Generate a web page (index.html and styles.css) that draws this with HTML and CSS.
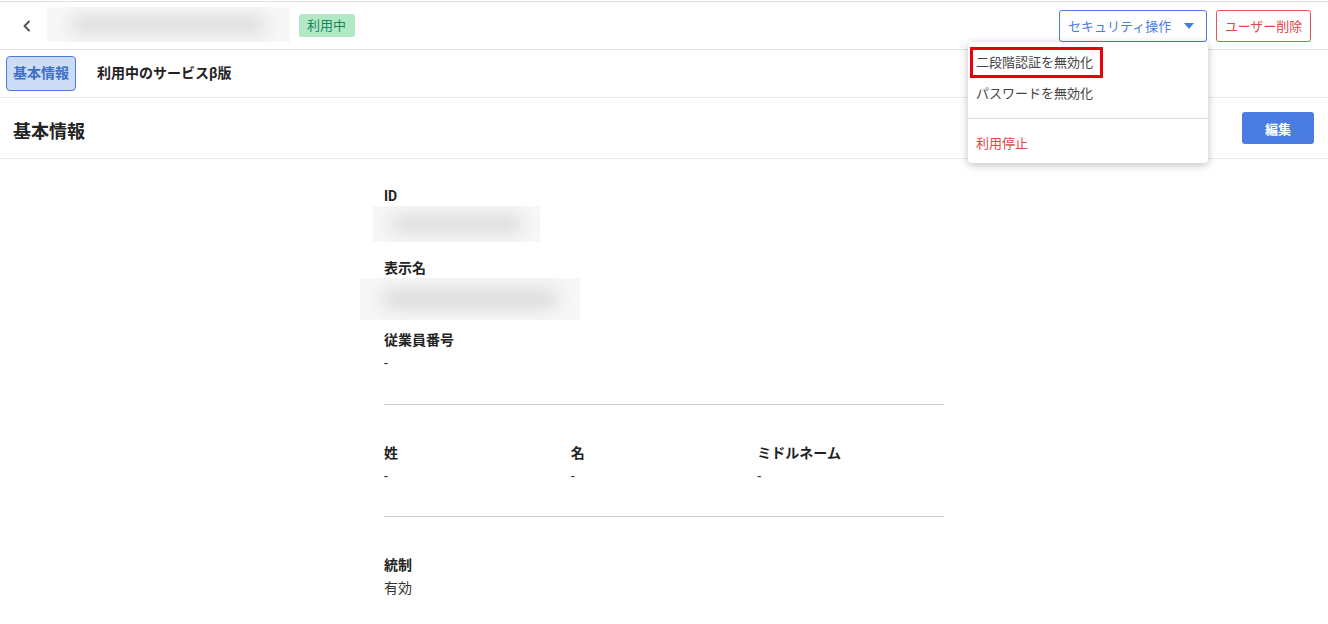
FILE: index.html
```html
<!DOCTYPE html>
<html lang="ja">
<head>
  <meta charset="UTF-8" />
  <meta name="viewport" content="width=device-width, initial-scale=1.0">
  <title>ユーザー詳細</title>
  <link rel="stylesheet" href="styles.css">
</head>
<body>

  <!-- ヘッダー -->
  <header class="pageHeader">
    <div class="headerLeft">
      <button class="backBtn" aria-label="戻る">
        <svg width="16" height="16" viewBox="0 0 16 16"><path d="M10 3.5 L5.5 8 L10 12.5" fill="none" stroke="#555" stroke-width="2" stroke-linecap="round" stroke-linejoin="round"/></svg>
      </button>
      <div class="blurBox nameBlur"><span class="blurInk"></span></div>
      <span class="statusBadge">利用中</span>
    </div>
    <div class="headerRight">
      <button class="btn btnOutline">セキュリティ操作
        <svg width="10" height="6" viewBox="0 0 10 6"><path d="M0 0 H10 L5 6 Z" fill="#4a7be0"/></svg>
      </button>
      <button class="btn btnDanger">ユーザー削除</button>
    </div>

    <!-- セキュリティ操作メニュー -->
    <div class="dropMenu">
      <div class="menuItem menuFocus">二段階認証を無効化</div>
      <div class="menuItem">パスワードを無効化</div>
      <div class="menuDivider"></div>
      <div class="menuItem menuRed">利用停止</div>
    </div>
  </header>

  <!-- タブ -->
  <nav class="tabBar">
    <div class="tab tabActive">基本情報</div>
    <div class="tab">利用中のサービスβ版</div>
  </nav>

  <div class="sectionHead">
    <h2>基本情報</h2>
    <button class="btn btnPrimary">編集</button>
  </div>

  <main class="detail">
    <div class="field">
      <div class="label">ID</div>
      <div class="blurBox idBlur"><span class="blurInk"></span></div>
    </div>
    <div class="field">
      <div class="label">表示名</div>
      <div class="blurBox dispBlur"><span class="blurInk"></span></div>
    </div>
    <div class="field">
      <div class="label">従業員番号</div>
      <div class="value">-</div>
    </div>

    <hr class="rule">

    <div class="nameRow">
      <div class="field">
        <div class="label">姓</div>
        <div class="value">-</div>
      </div>
      <div class="field">
        <div class="label">名</div>
        <div class="value">-</div>
      </div>
      <div class="field">
        <div class="label">ミドルネーム</div>
        <div class="value">-</div>
      </div>
    </div>

    <hr class="rule">

    <div class="field">
      <div class="label">統制</div>
      <div class="value">有効</div>
    </div>
  </main>

</body>
</html>
```

FILE: styles.css
```css
* { margin: 0; padding: 0; box-sizing: border-box; }
html, body {
  font-family: Roboto, "Noto Sans CJK JP", sans-serif;
  background: #fff;
  color: #222;
  overflow: hidden;
}
body { padding-top: 1px; }

button { font-family: inherit; background: none; border: none; cursor: pointer; }

.pageHeader {
  position: relative;
  height: 49px;
  border-top: 1px solid #ddd;
  border-bottom: 1px solid #e3e3e3;
  display: flex;
  align-items: center;
  justify-content: space-between;
  padding: 0 17px 0 18px;
}
.headerLeft { display: flex; align-items: center; }
.backBtn { width: 18px; height: 18px; display: flex; align-items: center; justify-content: center; margin-right: 11px; margin-top: 1px; }

.blurBox {
  position: relative;
  overflow: hidden;
  background: #f7f7f7;
}
.blurInk {
  position: absolute;
  left: 10%; right: 10%; top: 30%; bottom: 30%;
  background: #d4d4d4;
  border-radius: 20px;
  filter: blur(9px);
}
.nameBlur { width: 243px; height: 35px; margin-right: 9px; margin-top: -2px; }

.statusBadge {
  background: #b3e8c6;
  color: #17865a;
  font-size: 13px;
  line-height: 23px;
  padding: 0 9px 0 8px;
  border-radius: 3px;
}

.headerRight { display: flex; gap: 9px; }

.btn {
  height: 32px;
  font-size: 13px;
  border-radius: 3px;
  padding: 0 8px;
  display: flex;
  align-items: center;
}
.btnOutline {
  border: 1px solid #4a7be0;
  color: #4a7be0;
  gap: 13px;
  width: 148px;
  padding: 0 0 0 8px;
}
.btnDanger {
  border: 1px solid #e95454;
  color: #e04848;
  width: 95px;
  justify-content: center;
  padding: 0;
}
.btnPrimary {
  background: #4a7be0;
  color: #fff;
  font-weight: bold;
  width: 72px;
  justify-content: center;
}

.dropMenu {
  position: absolute;
  top: 40px;
  left: 968px;
  width: 240px;
  background: #fff;
  border-radius: 4px;
  box-shadow: 0 2px 8px rgba(0,0,0,0.25);
  padding: 5px 0 3px;
  z-index: 5;
}
.menuItem {
  font-size: 13px;
  color: #444;
  line-height: 32px;
  padding: 0 8px;
}
.menuFocus {
  outline: 3px solid #e8000b;
  outline-offset: -3px;
  margin: 0 5px 0 2px;
  padding: 0 6px;
  width: 133px;
  line-height: 31px;
}
.menuDivider { border-top: 1px solid #ddd; margin: 8px 0 9px; height: 0; }
.menuRed { color: #e04848; }

.tabBar {
  height: 48px;
  border-bottom: 1px solid #e8e8e8;
  display: flex;
  align-items: center;
  padding-left: 6px;
  gap: 14px;
}
.tab {
  font-size: 14px;
  font-weight: bold;
  color: #222;
  padding: 0 6px;
  line-height: 33px;
  border: 1px solid transparent;
  border-radius: 4px;
}
.tabActive {
  background: #cbdcf4;
  border-color: #4a7be0;
  color: #3f6fc8;
}

.sectionHead {
  height: 61px;
  border-bottom: 1px solid #ebebeb;
  display: flex;
  align-items: center;
  justify-content: space-between;
  padding: 0 14px 0 13px;
}
.sectionHead h2 { font-size: 18px; font-weight: bold; color: #222; margin-top: 3px; }

.detail {
  width: 560px;
  margin: 27px 0 0 384px;
}
.field { margin-bottom: 16px; }
.label { font-size: 14px; font-weight: bold; line-height: 20px; color: #222; }
.value { font-size: 14px; line-height: 20px; margin-top: 3px; color: #333; }

.idBlur { width: 167px; height: 36px; margin: 0 0 0 -11px; }
.dispBlur { width: 220px; height: 42px; margin: 0 0 -6px -24px; }

.rule { border: none; border-top: 1px solid #ccc; margin: 31px 0 38px; }

.nameRow { display: grid; grid-template-columns: repeat(3, 1fr); }
.nameRow .field { margin-bottom: 0; }
.nameRow + .rule { margin-top: 30px; margin-bottom: 38px; }
```
